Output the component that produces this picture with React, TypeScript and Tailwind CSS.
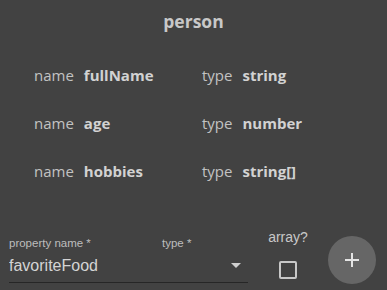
const fields = [
  { name: 'fullName', type: 'string' },
  { name: 'age', type: 'number' },
  { name: 'hobbies', type: 'string[]' },
]

function FieldRow({ name, type }: { name: string; type: string }) {
  return (
    <div className="grid grid-cols-[168px_1fr] h-12 items-center text-[15px]">
      <div className="flex items-center gap-[10px]">
        <span className="text-[#c2c2c2]">name</span>
        <span className="font-bold text-[#d2d2d2]">{name}</span>
      </div>
      <div className="flex items-center gap-[10px]">
        <span className="text-[#c2c2c2]">type</span>
        <span className="font-bold text-[#d2d2d2]">{type}</span>
      </div>
    </div>
  )
}

export default function App() {
  return (
    <div className="w-[387px] h-[290px] bg-[#424242] overflow-hidden font-['Open_Sans',sans-serif]">
      <h1 className="h-[42px] flex items-center justify-center text-[17.5px] font-bold text-[#c8c8c8]">
        person
      </h1>

      <div className="pt-[9px] pl-[34px]">
        {fields.map((f) => (
          <FieldRow key={f.name} name={f.name} type={f.type} />
        ))}
      </div>

      <div className="flex items-start font-['Liberation_Sans',Arial,sans-serif]">
        <div className="mt-[41px] ml-[9px] w-[239px] flex border-b border-[#262626] pb-[7px]">
          <div className="w-[153px] flex flex-col">
            <label className="text-[11.5px] leading-[14px] text-[#bdbdbd]">property name *</label>
            <input
              type="text"
              value="favoriteFood"
              readOnly
              className="mt-[6px] w-full bg-transparent outline-none text-[16px] leading-[19px] h-[19px] text-[#d4d4d4]"
            />
          </div>
          <div className="flex-1 flex flex-col">
            <label className="text-[11.5px] leading-[14px] text-[#bdbdbd]">type *</label>
            <div className="mt-[6px] h-[19px] flex items-center justify-end pr-[7px]">
              <svg width="10" height="5" viewBox="0 0 10 5">
                <path d="M0 0 L10 0 L5 5 Z" fill="#cfcfcf" />
              </svg>
            </div>
          </div>
        </div>

        <div className="mt-[34px] ml-[20px] w-[40px] flex flex-col items-center">
          <span className="text-[14px] leading-[16px] text-[#c8c8c8]">array?</span>
          <span className="mt-[16px] w-[18px] h-[18px] border-2 border-[#c8c8c8] rounded-[2px]" />
        </div>

        <button
          type="button"
          className="mt-[41px] ml-[20px] w-12 h-12 rounded-full bg-[#666666] flex items-center justify-center"
        >
          <svg width="24" height="24" viewBox="0 0 24 24">
            <path d="M19 13h-6v6h-2v-6H5v-2h6V5h2v6h6v2z" fill="#e4e4e4" />
          </svg>
        </button>
      </div>
    </div>
  )
}
